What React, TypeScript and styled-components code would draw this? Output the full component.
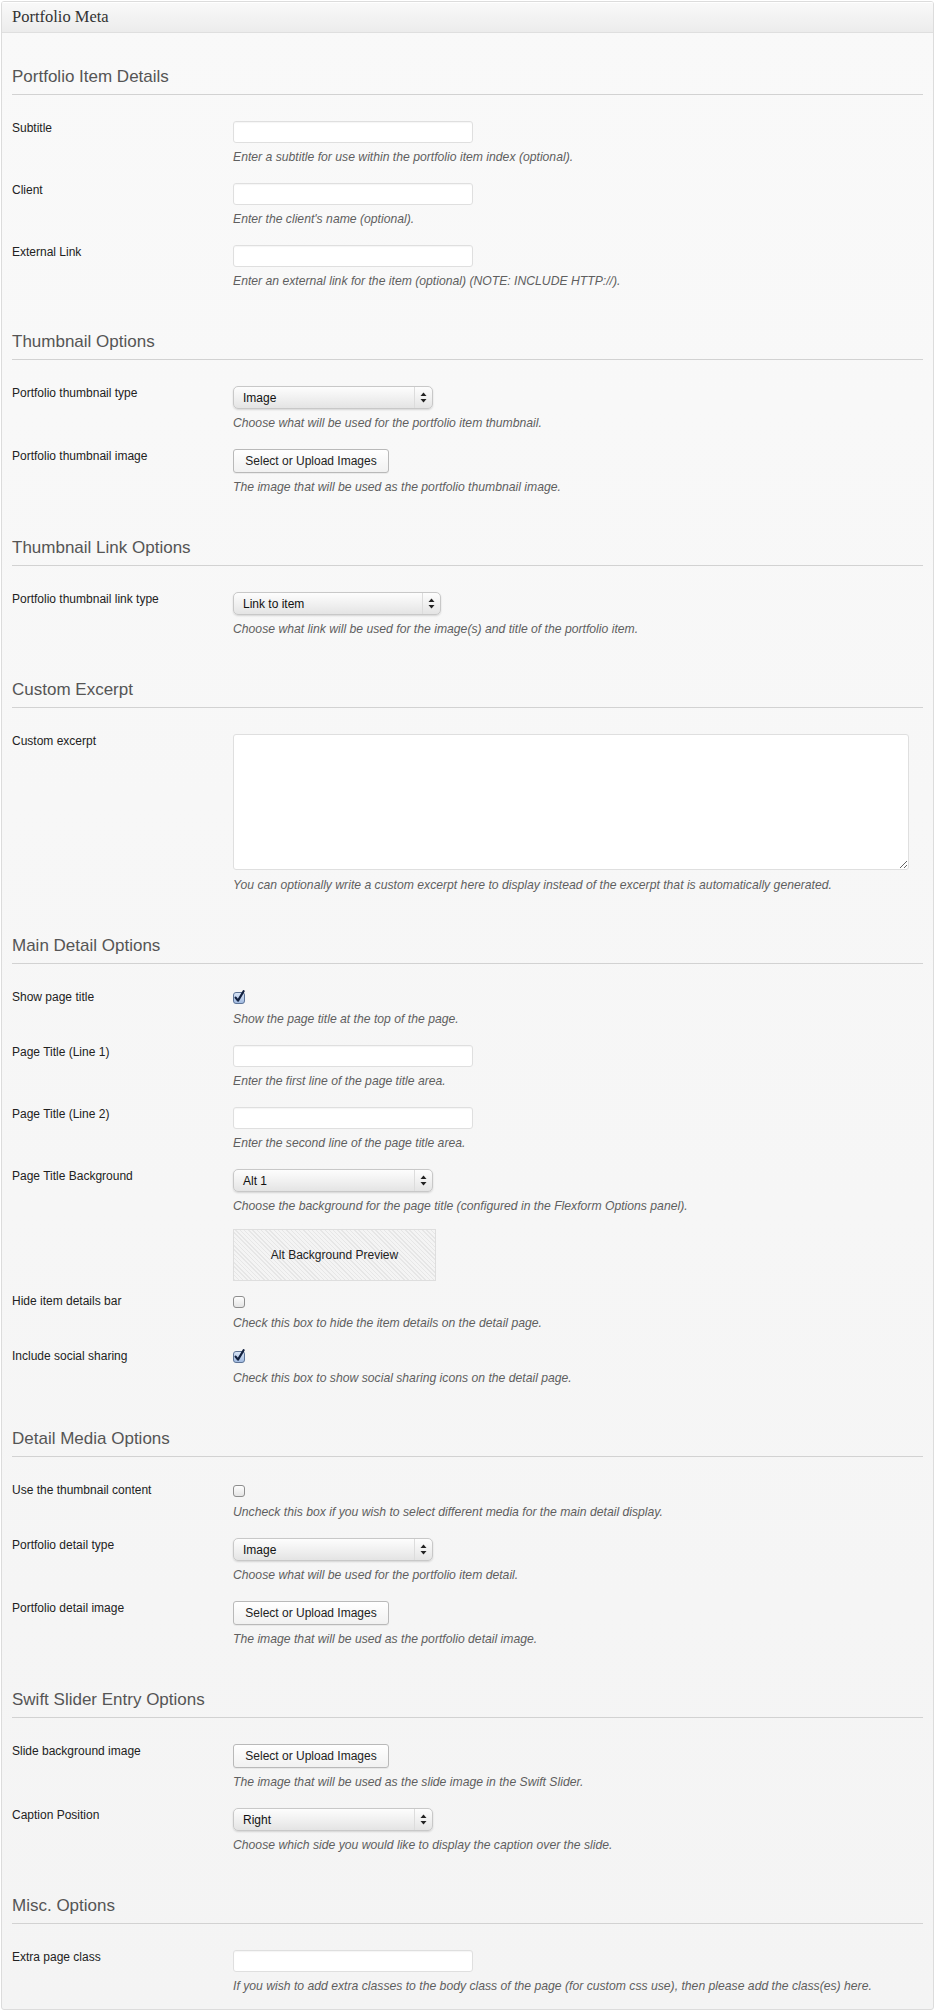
import React from 'react';
import styled, { createGlobalStyle } from 'styled-components';

const GlobalStyle = createGlobalStyle`
  html, body {
    margin: 0;
    padding: 0;
    background: #ffffff;
  }
  body {
    font-family: "Liberation Sans", Arial, sans-serif;
    color: #333;
  }
`;

const MetaBox = styled.div`
  margin: 1px 2px 0 1px;
  border: 1px solid #dcdcdc;
  border-radius: 3px;
  background: linear-gradient(#f9f9f9, #f4f4f4);
  overflow: hidden;
`;

const BoxHeader = styled.div`
  height: 30px;
  display: flex;
  align-items: center;
  padding: 0 10px;
  background: linear-gradient(#f9f9f9, #ececec);
  border-bottom: 1px solid #dfdfdf;
  font-family: "Liberation Serif", Georgia, serif;
  font-size: 16.5px;
  color: #333;
  box-shadow: inset 0 1px 0 #fff;
`;

const BoxBody = styled.div`
  padding: 0 10px 6px;
`;

const Section = styled.section``;

const SectionTitle = styled.h3`
  margin: 32px 0 0;
  padding: 0 0 5px;
  font-family: "Liberation Sans", Arial, sans-serif;
  font-weight: 400;
  font-size: 17px;
  line-height: 24px;
  color: #555;
  border-bottom: 1px solid #d2d2d2;
`;

const Rows = styled.div`
  padding-top: 17px;
`;

const Row = styled.div<{ $flush?: boolean }>`
  display: grid;
  grid-template-columns: 221px 1fr;
  padding: ${(p) => (p.$flush ? '6px 0 4px' : '9px 0')};
`;

const Label = styled.label`
  font-size: 12px;
  line-height: 14px;
  color: #222;
`;

const Field = styled.div`
  display: flex;
  flex-direction: column;
  align-items: flex-start;
`;

const Help = styled.p<{ $gap?: number }>`
  margin: ${(p) => p.$gap ?? 6}px 0 0;
  font-size: 12.2px;
  line-height: 16px;
  font-style: italic;
  color: #5f5f5f;
`;

const TextInput = styled.input`
  box-sizing: border-box;
  width: 240px;
  height: 22px;
  margin: 0;
  border: 1px solid #dfdfdf;
  border-radius: 3px;
  background: #fff;
  box-shadow: inset 0 1px 1px rgba(0, 0, 0, 0.04);
`;

const TextArea = styled.textarea`
  box-sizing: border-box;
  width: 676px;
  height: 136px;
  margin: 0;
  border: 1px solid #dfdfdf;
  border-radius: 3px;
  background: #fff;
  resize: both;
`;

const SelectBox = styled.div<{ $width: number }>`
  box-sizing: border-box;
  width: ${(p) => p.$width}px;
  height: 23px;
  display: flex;
  align-items: stretch;
  border: 1px solid #c8c8c8;
  border-radius: 5px;
  background: linear-gradient(#fdfdfd 0%, #f1f1f1 50%, #e4e4e4 100%);
  box-shadow: 0 1px 2px rgba(0, 0, 0, 0.14);
  font-size: 12px;
  color: #111;
`;

const SelectValue = styled.span`
  flex: 1;
  display: flex;
  align-items: center;
  padding-left: 9px;
`;

const SelectArrow = styled.span`
  width: 17px;
  display: flex;
  align-items: center;
  justify-content: center;
  border-left: 1px solid #dcdcdc;
`;

const UploadButton = styled.button`
  box-sizing: border-box;
  width: 156px;
  height: 24px;
  margin: 0;
  padding: 0;
  border: 1px solid #b9b9b9;
  border-radius: 3px;
  background: linear-gradient(#ffffff, #f1f1f1);
  font-family: "Liberation Sans", Arial, sans-serif;
  font-size: 12px;
  color: #222;
  box-shadow: 0 1px 0 rgba(0, 0, 0, 0.05);
`;

const CheckWrap = styled.span`
  display: block;
  height: 15px;
  width: 14px;
`;

const Preview = styled.div`
  box-sizing: border-box;
  width: 203px;
  height: 52px;
  display: flex;
  align-items: center;
  justify-content: center;
  border: 1px solid #dedede;
  background-color: #f3f3f3;
  background-image: repeating-linear-gradient(
    45deg,
    #e6e6e6 0px,
    #e6e6e6 1px,
    #f4f4f4 1px,
    #f4f4f4 3px
  );
  font-size: 12px;
  color: #222;
`;

const Arrows = () => (
  <svg width="7" height="11" viewBox="0 0 7 11">
    <path d="M3.5 0.5 L6.5 4 L0.5 4 Z" fill="#222" />
    <path d="M3.5 10.5 L6.5 7 L0.5 7 Z" fill="#222" />
  </svg>
);

const CheckBox = ({ checked }: { checked: boolean }) => (
  <CheckWrap>
    <svg width="14" height="15" viewBox="0 0 14 15">
      <defs>
        <linearGradient id={checked ? 'cbOn' : 'cbOff'} x1="0" y1="0" x2="0" y2="1">
          <stop offset="0" stopColor={checked ? '#dbe6f6' : '#ffffff'} />
          <stop offset="1" stopColor={checked ? '#9fb9e0' : '#e3e3e3'} />
        </linearGradient>
      </defs>
      <rect
        x="0.5"
        y="2.5"
        width="11"
        height="11"
        rx="2.5"
        fill={`url(#${checked ? 'cbOn' : 'cbOff'})`}
        stroke={checked ? '#5f7597' : '#8e8e8e'}
      />
      {checked && (
        <path
          d="M2.6 7.6 L5 10.6 L10.6 1.2"
          fill="none"
          stroke="#13213f"
          strokeWidth="2.2"
          strokeLinecap="round"
          strokeLinejoin="round"
        />
      )}
    </svg>
  </CheckWrap>
);

type FieldDef =
  | { kind: 'text'; label: string; help: string }
  | { kind: 'select'; label: string; value: string; width: number; help: string }
  | { kind: 'button'; label: string; help: string }
  | { kind: 'textarea'; label: string; help: string }
  | { kind: 'checkbox'; label: string; checked: boolean; help: string }
  | { kind: 'preview'; text: string };

type SectionDef = { title: string; fields: FieldDef[] };

const sections: SectionDef[] = [
  {
    title: 'Portfolio Item Details',
    fields: [
      { kind: 'text', label: 'Subtitle', help: 'Enter a subtitle for use within the portfolio item index (optional).' },
      { kind: 'text', label: 'Client', help: "Enter the client's name (optional)." },
      { kind: 'text', label: 'External Link', help: 'Enter an external link for the item (optional) (NOTE: INCLUDE HTTP://).' },
    ],
  },
  {
    title: 'Thumbnail Options',
    fields: [
      { kind: 'select', label: 'Portfolio thumbnail type', value: 'Image', width: 200, help: 'Choose what will be used for the portfolio item thumbnail.' },
      { kind: 'button', label: 'Portfolio thumbnail image', help: 'The image that will be used as the portfolio thumbnail image.' },
    ],
  },
  {
    title: 'Thumbnail Link Options',
    fields: [
      { kind: 'select', label: 'Portfolio thumbnail link type', value: 'Link to item', width: 208, help: 'Choose what link will be used for the image(s) and title of the portfolio item.' },
    ],
  },
  {
    title: 'Custom Excerpt',
    fields: [
      { kind: 'textarea', label: 'Custom excerpt', help: 'You can optionally write a custom excerpt here to display instead of the excerpt that is automatically generated.' },
    ],
  },
  {
    title: 'Main Detail Options',
    fields: [
      { kind: 'checkbox', label: 'Show page title', checked: true, help: 'Show the page title at the top of the page.' },
      { kind: 'text', label: 'Page Title (Line 1)', help: 'Enter the first line of the page title area.' },
      { kind: 'text', label: 'Page Title (Line 2)', help: 'Enter the second line of the page title area.' },
      { kind: 'select', label: 'Page Title Background', value: 'Alt 1', width: 200, help: 'Choose the background for the page title (configured in the Flexform Options panel).' },
      { kind: 'preview', text: 'Alt Background Preview' },
      { kind: 'checkbox', label: 'Hide item details bar', checked: false, help: 'Check this box to hide the item details on the detail page.' },
      { kind: 'checkbox', label: 'Include social sharing', checked: true, help: 'Check this box to show social sharing icons on the detail page.' },
    ],
  },
  {
    title: 'Detail Media Options',
    fields: [
      { kind: 'checkbox', label: 'Use the thumbnail content', checked: false, help: 'Uncheck this box if you wish to select different media for the main detail display.' },
      { kind: 'select', label: 'Portfolio detail type', value: 'Image', width: 200, help: 'Choose what will be used for the portfolio item detail.' },
      { kind: 'button', label: 'Portfolio detail image', help: 'The image that will be used as the portfolio detail image.' },
    ],
  },
  {
    title: 'Swift Slider Entry Options',
    fields: [
      { kind: 'button', label: 'Slide background image', help: 'The image that will be used as the slide image in the Swift Slider.' },
      { kind: 'select', label: 'Caption Position', value: 'Right', width: 200, help: 'Choose which side you would like to display the caption over the slide.' },
    ],
  },
  {
    title: 'Misc. Options',
    fields: [
      { kind: 'text', label: 'Extra page class', help: 'If you wish to add extra classes to the body class of the page (for custom css use), then please add the class(es) here.' },
    ],
  },
];

const renderControl = (f: FieldDef) => {
  switch (f.kind) {
    case 'text':
      return <TextInput type="text" />;
    case 'select':
      return (
        <SelectBox $width={f.width}>
          <SelectValue>{f.value}</SelectValue>
          <SelectArrow>
            <Arrows />
          </SelectArrow>
        </SelectBox>
      );
    case 'button':
      return <UploadButton type="button">Select or Upload Images</UploadButton>;
    case 'textarea':
      return <TextArea />;
    case 'checkbox':
      return <CheckBox checked={f.checked} />;
    default:
      return null;
  }
};

const FieldRow = ({ f }: { f: FieldDef }) => {
  if (f.kind === 'preview') {
    return (
      <Row $flush>
        <span />
        <Field>
          <Preview>{f.text}</Preview>
        </Field>
      </Row>
    );
  }
  return (
    <Row>
      <Label>{f.label}</Label>
      <Field>
        {renderControl(f)}
        <Help $gap={f.kind === 'textarea' ? 7 : 6}>{f.help}</Help>
      </Field>
    </Row>
  );
};

const App = () => {
  return (
    <>
      <GlobalStyle />
      <MetaBox>
        <BoxHeader>Portfolio Meta</BoxHeader>
        <BoxBody>
          {sections.map((s) => (
            <Section key={s.title}>
              <SectionTitle>{s.title}</SectionTitle>
              <Rows>
                {s.fields.map((f, i) => (
                  <FieldRow key={i} f={f} />
                ))}
              </Rows>
            </Section>
          ))}
        </BoxBody>
      </MetaBox>
    </>
  );
};

export default App;
